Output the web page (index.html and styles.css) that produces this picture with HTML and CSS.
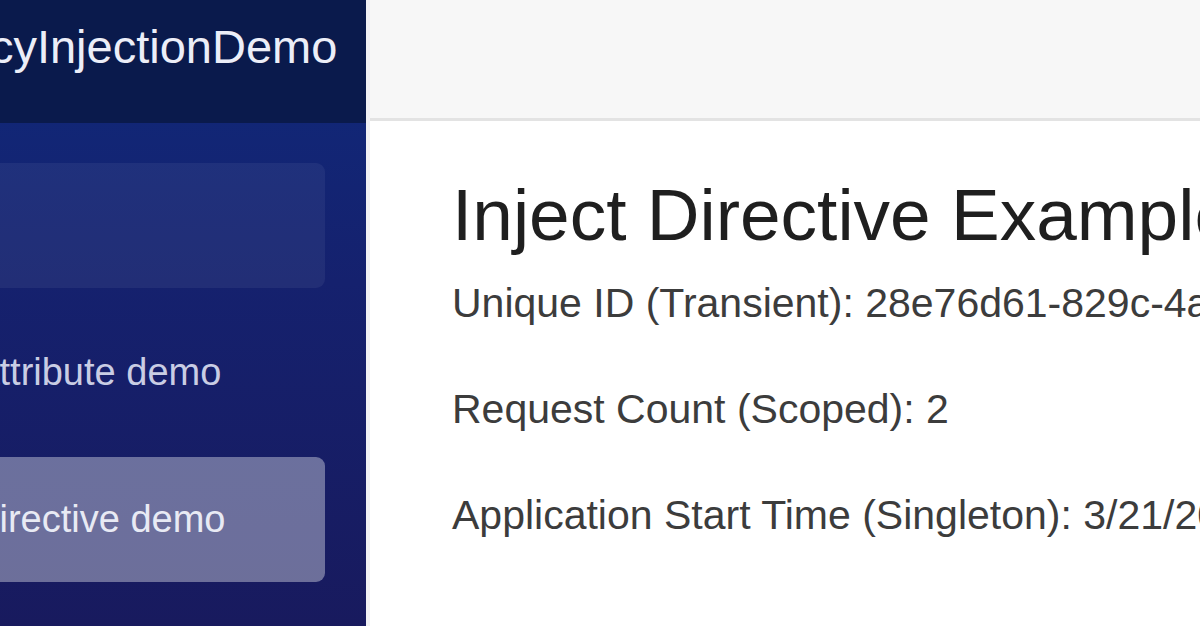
FILE: index.html
```html
<!DOCTYPE html>
<html lang="en">
<head>
<meta charset="utf-8">
<title>Inject Directive Example</title>
<link rel="stylesheet" href="styles.css">
</head>
<body>
<div class="page">
  <aside class="sidebar">
    <div class="brand-row">
      <span class="brand">DependencyInjectionDemo</span>
    </div>
    <nav class="nav">
      <a class="nav-link hover" href="#">Home</a>
      <a class="nav-link" href="#">Inject attribute demo</a>
      <a class="nav-link active" href="#">Inject directive demo</a>
    </nav>
  </aside>
  <main class="main">
    <div class="top-row"></div>
    <article class="content">
      <h1 class="title">Inject Directive Example</h1>
      <p class="line">Unique ID (Transient): 28e76d61-829c-4a3f-9d2e-6b1f0c7e5a90</p>
      <p class="line">Request Count (Scoped): 2</p>
      <p class="line">Application Start Time (Singleton): 3/21/2024 10:15:32 AM</p>
    </article>
  </main>
</div>
</body>
</html>
```

FILE: styles.css
```css
html, body {
  margin: 0;
  padding: 0;
  height: 100%;
  overflow: hidden;
  background: #ffffff;
  font-family: "Liberation Sans", Arial, sans-serif;
}

.page {
  display: flex;
  height: 626px;
  width: 1200px;
  overflow: hidden;
}

.sidebar {
  flex: 0 0 606px;
  margin-left: -240px;
  display: flex;
  flex-direction: column;
  background: linear-gradient(180deg, #0f2a7c 0%, #15216e 45%, #181a5e 100%);
}

.brand-row {
  height: 123px;
  box-sizing: border-box;
  padding: 23px 0 0 13px;
  background: #0a1a4c;
  white-space: nowrap;
}

.brand {
  font-size: 47px;
  line-height: 47px;
  color: #eceef8;
}

.nav {
  display: flex;
  flex-direction: column;
  gap: 22px;
  padding: 40px 41px 0 16px;
}

.nav-link {
  height: 125px;
  box-sizing: border-box;
  display: flex;
  align-items: center;
  padding-left: 101px;
  border-radius: 9px;
  font-size: 38px;
  color: #c9cde4;
  text-decoration: none;
  white-space: nowrap;
}

.nav-link.hover {
  background: rgba(255, 255, 255, 0.06);
}

.nav-link.active {
  background: rgba(255, 255, 255, 0.37);
  color: #e8eaf4;
}

.main {
  flex: 1;
  display: flex;
  flex-direction: column;
  min-width: 0;
  border-left: 4px solid #f1f1f4;
}

.top-row {
  height: 118px;
  flex: 0 0 118px;
  background: #f7f7f7;
  border-bottom: 3px solid #e3e3e3;
}

.content {
  padding: 0 0 0 82px;
  white-space: nowrap;
}

.title {
  margin: 50px 0 14px 0;
  font-size: 73px;
  line-height: 1.2;
  font-weight: 400;
  color: #1f1f1f;
}

.line {
  margin: 0 0 46px 0;
  font-size: 41px;
  line-height: 60px;
  color: #3c3c3c;
}
```
